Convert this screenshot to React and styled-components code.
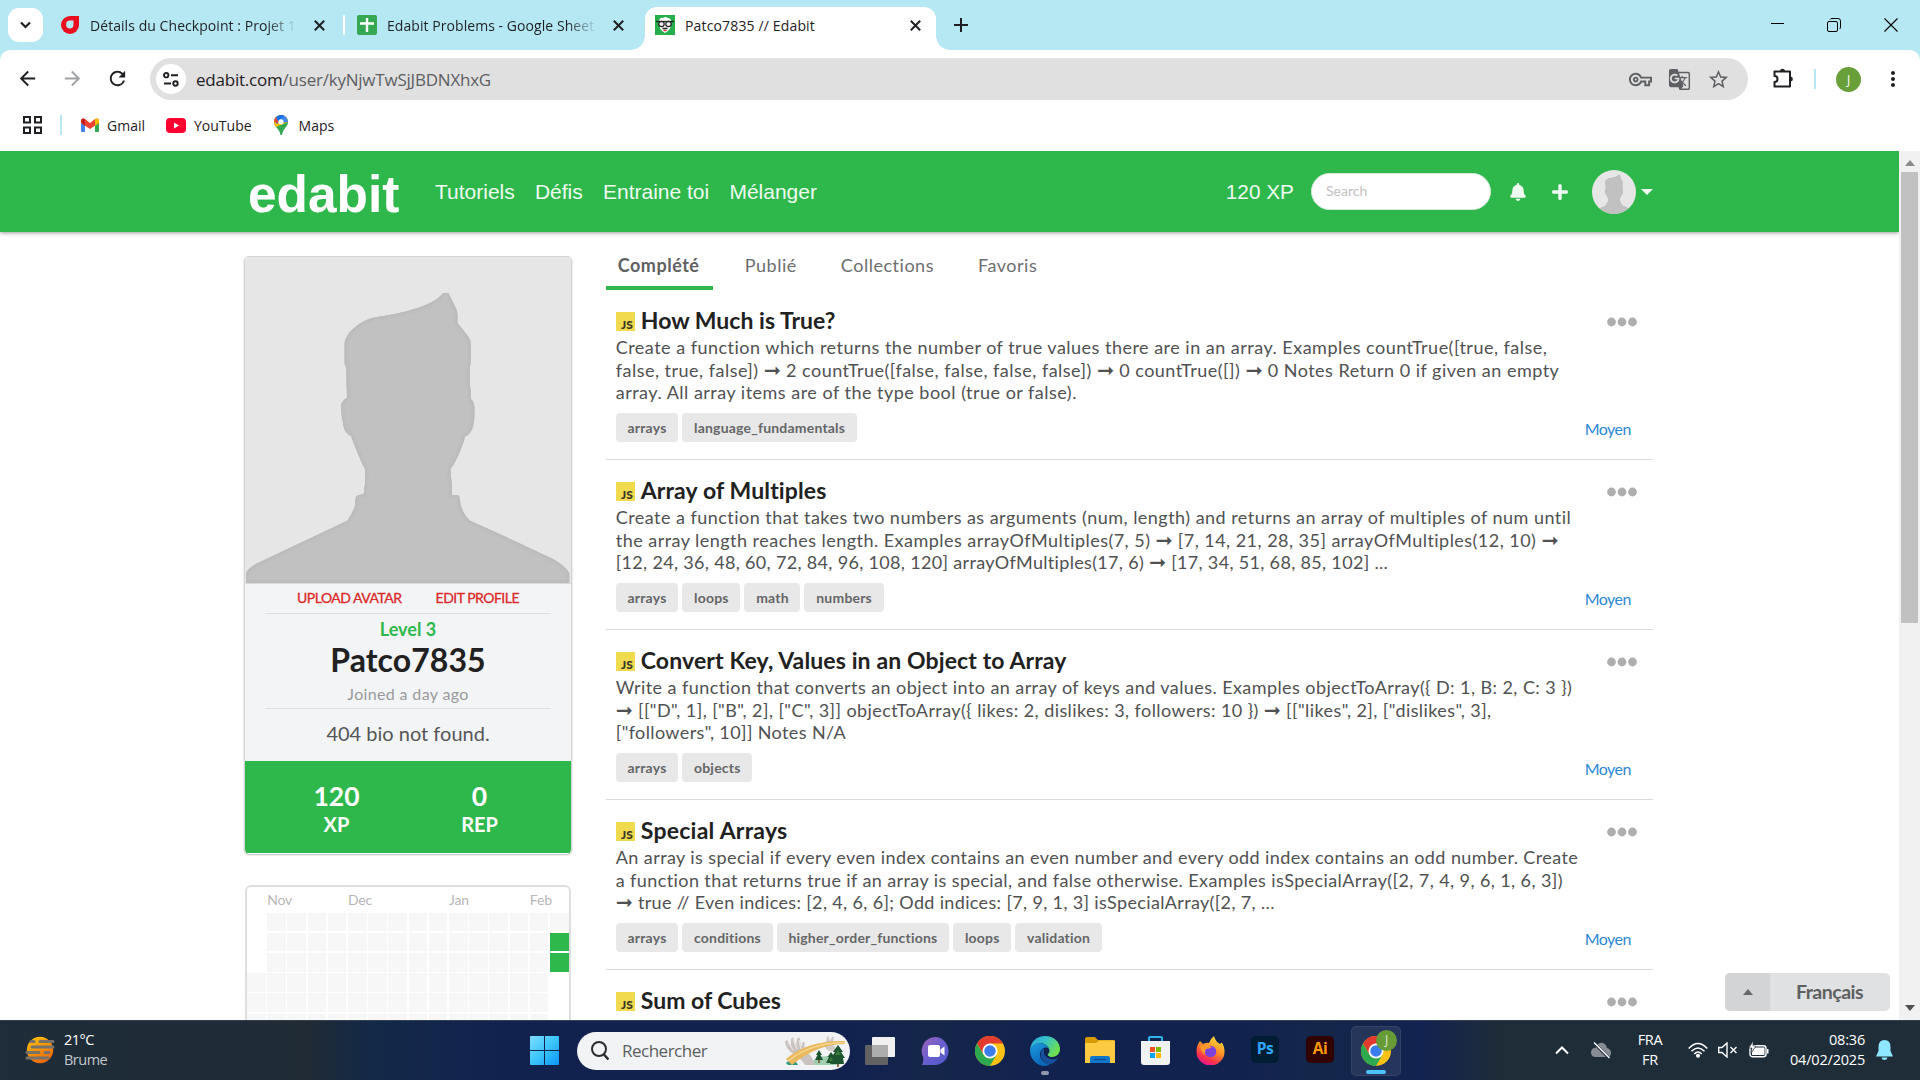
import React from 'react';
import styled, { createGlobalStyle, css } from 'styled-components';
import {
  MdArrowBack,
  MdArrowForward,
  MdRefresh,
  MdOutlineVpnKey,
  MdStarBorder,
  MdMoreVert,
  MdGTranslate,
} from 'react-icons/md';
import { FaBell, FaPlus } from 'react-icons/fa';

const GREEN = '#2eb84c';

const Global = createGlobalStyle`
  *, *::before, *::after { box-sizing: border-box; }
  html, body { margin: 0; padding: 0; background: #fff; overflow: hidden; }
  body { font-family: Lato, "Liberation Sans", sans-serif; }
  svg { display: block; flex: none; }
`;

const Screen = styled.div`
  width: 1920px;
  height: 1080px;
  display: flex;
  flex-direction: column;
  overflow: hidden;
`;

/* ---------- browser chrome ---------- */
const uiFont = css`
  font-family: "Open Sans", "Noto Sans", sans-serif;
  color: #1f2023;
  white-space: nowrap;
`;

const TabStrip = styled.div`
  ${uiFont}
  height: 50px;
  flex: none;
  display: flex;
  background: #b5e8f3;
`;
const TabSearch = styled.div`
  width: 35px;
  height: 34px;
  margin: 8px 7px 0 8px;
  border-radius: 11px;
  background: #fff;
  display: flex;
  align-items: center;
  justify-content: center;
`;
const BrowserTab = styled.div`
  width: ${(p) => p.$w}px;
  padding-left: ${(p) => p.$pad}px;
  display: flex;
  align-items: center;
  font-size: 14px;
  letter-spacing: ${(p) => (p.$active ? '0.15px' : '0.06px')};
  position: relative;
  ${(p) =>
    p.$active &&
    css`
      margin-top: 7px;
      padding-bottom: 7px;
      background: #fff;
      border-radius: 12px 12px 0 0;
      &::before, &::after {
        content: '';
        position: absolute;
        bottom: 0;
        width: 14px;
        height: 14px;
      }
      &::before { left: -14px; background: radial-gradient(circle at 0 0, #b5e8f3 13.5px, #fff 14px); }
      &::after { right: -14px; background: radial-gradient(circle at 100% 0, #b5e8f3 13.5px, #fff 14px); }
    `}
`;
const TabTitle = styled.span`
  width: ${(p) => p.$w}px;
  margin-left: ${(p) => p.$gap}px;
  padding-top: 1px;
  overflow: hidden;
  ${(p) => p.$fade && css`mask-image: linear-gradient(90deg, #000 ${p.$w - 32}px, transparent ${p.$w - 2}px);`}
`;
const TabClose = styled.span`
  margin-left: auto;
  margin-right: ${(p) => p.$r}px;
`;
const TabDivider = styled.div`
  width: 2px;
  height: 20px;
  margin-top: 15px;
  border-radius: 1px;
  background: #fff;
`;
const NewTab = styled.div`
  margin-left: 18px;
  display: flex;
  align-items: center;
`;
const WindowButtons = styled.div`
  margin-left: auto;
  padding-right: 22px;
  display: flex;
  align-items: center;
  gap: 43px;
`;

const ChromeBody = styled.div`
  flex: none;
  height: 101px;
  background: #b5e8f3;
`;
const ChromePanel = styled.div`
  ${uiFont}
  height: 101px;
  background: #fff;
  border-radius: 10px 10px 0 0;
`;
const Toolbar = styled.div`
  height: 58px;
  padding: 0 15px 0 16px;
  display: flex;
  align-items: center;
  color: #1f2023;
`;
const NavButtons = styled.div`
  width: 134px;
  display: flex;
  align-items: center;
  gap: 22px;
  svg { position: relative; top: -1px; }
  svg:nth-child(2) { color: #a0a2a5; }
`;
const Omnibox = styled.div`
  width: 1598px;
  height: 42px;
  padding: 0 18px 0 6px;
  border-radius: 21px;
  background: #e0e0e0;
  display: flex;
  align-items: center;
  font-size: 17px;
  letter-spacing: -0.22px;
`;
const SiteInfo = styled.div`
  width: 30px;
  height: 30px;
  border-radius: 50%;
  background: #fff;
  margin-right: 10px;
  display: flex;
  align-items: center;
  justify-content: center;
`;
const UrlPath = styled.span`color: #5d5f62;`;
const OmniActions = styled.div`
  margin-left: auto;
  display: flex;
  align-items: center;
  gap: 16px;
  color: #5d5f62;
`;
const ToolbarEnd = styled.div`
  display: flex;
  align-items: center;
  padding-left: 23px;
`;
const ToolbarRule = styled.div`
  width: 2px;
  height: 20px;
  margin: 0 20px 0 19px;
  background: #b5e8f3;
`;
const Profile = styled.div`
  width: 25px;
  height: 25px;
  border-radius: 50%;
  background: #689f38;
  color: #fff;
  font-size: 12px;
  line-height: 25px;
  text-align: center;
  margin-right: 20px;
`;
const Bookmarks = styled.div`
  height: 34px;
  padding-left: 23px;
  display: flex;
  align-items: center;
  font-size: 14px;
`;
const BookmarkRule = styled.div`
  width: 2px;
  height: 20px;
  margin: 0 19px 0 18px;
  background: #b5e8f3;
`;
const Bookmark = styled.div`
  display: flex;
  align-items: center;
  gap: 8px;
  margin-right: 21px;
`;

/* ---------- page ---------- */
const Viewport = styled.div`
  height: 869px;
  flex: none;
  display: flex;
  overflow: hidden;
  position: relative;
`;
const Page = styled.div`
  width: 1899px;
  overflow: hidden;
`;
const SiteHeader = styled.header`
  height: 81px;
  padding: 0 246px 0 248px;
  background: ${GREEN};
  box-shadow: 0 1px 4px rgba(0, 0, 0, 0.4);
  display: flex;
  align-items: center;
  font-family: "Liberation Sans", Arial, sans-serif;
  color: #effaf1;
  position: relative;
`;
const Brand = styled.div`
  width: 187px;
  padding-top: 4px;
  font-size: 51.4px;
  font-weight: 700;
  line-height: 60px;
  color: #fff;
`;
const SiteNav = styled.nav`
  display: flex;
  gap: 20.2px;
  font-size: 21px;
  line-height: 24px;
`;
const HeaderEnd = styled.div`
  margin-left: auto;
  display: flex;
  align-items: center;
`;
const Xp = styled.span`
  font-size: 20.8px;
  line-height: 24px;
  margin-right: 17px;
`;
const SearchBox = styled.div`
  width: 180px;
  height: 37px;
  padding-left: 14px;
  border-radius: 19px;
  border: 1px solid #d5e8d9;
  background: #fff;
  color: #bfc1c2;
  font: 14px/34px Lato, sans-serif;
  margin-right: 18px;
`;
const HeaderIcons = styled.div`
  display: flex;
  align-items: center;
  gap: 24px;
`;
const HeaderAvatar = styled.div`
  width: 44px;
  height: 44px;
  border-radius: 50%;
  overflow: hidden;
  margin: 0 5px 0 23px;
`;
const Caret = styled.div`
  width: 0;
  height: 0;
  border: ${(p) => p.$half || 5.5}px solid transparent;
  ${(p) =>
    p.$up
      ? css`border-top: 0; border-bottom: 6px solid ${p.$color};`
      : css`border-bottom: 0; border-top: ${p.$half || 6}px solid ${p.$color};`}
`;

const Columns = styled.main`
  display: flex;
  padding: 0 246px 0 244px;
`;
const Aside = styled.aside`
  width: 362px;
  padding-top: 24px;
`;
const Card = styled.section`
  width: 328px;
  height: 598px;
  border-radius: 5px;
  border: 1px solid #d4d4d5;
  border-bottom: 0;
  box-shadow: 0 1px 2px #bcbdbd;
  overflow: hidden;
`;
const CardMeta = styled.div`
  height: 178px;
  border-top: 1px solid #d8d9da;
  background: #f3f4f5;
  padding: 0 20px;
  text-align: center;
`;
const CardLinks = styled.div`
  height: 30px;
  display: flex;
  justify-content: center;
  gap: 34px;
  border-bottom: 1px solid #dededf;
  font-size: 14px;
  line-height: 28px;
  letter-spacing: -0.5px;
  color: #db2828;
  -webkit-text-stroke: 0.3px #db2828;
`;
const Level = styled.div`
  font-size: 18px;
  font-weight: 700;
  line-height: 31px;
  color: ${GREEN};
`;
const UserName = styled.div`
  font-size: 32px;
  font-weight: 700;
  height: 31px;
  line-height: 29px;
  letter-spacing: 0.05px;
  color: #212121;
`;
const Joined = styled.div`
  padding-top: 4px;
  line-height: 28px;
  font-size: 16px;
  letter-spacing: 0.35px;
  color: #999a9b;
  border-bottom: 1px solid #dededf;
`;
const Bio = styled.div`
  font-size: 20px;
  line-height: 49px;
  color: #555657;
`;
const Stats = styled.div`
  height: 92px;
  padding: 20px 20px 0;
  background: ${GREEN};
  display: grid;
  grid-template-columns: 1fr 1fr;
  text-align: center;
  font-weight: 700;
  color: #fff;
`;
const StatValue = styled.div`
  font-size: 26.5px;
  line-height: 30px;
`;
const StatLabel = styled.div`
  font-size: 20px;
  line-height: 26px;
`;

const Activity = styled.section`
  width: 326px;
  height: 200px;
  margin: 31px 0 0 1px;
  border: 2px solid #dededf;
  border-radius: 6px;
  overflow: hidden;
`;
const Months = styled.div`
  display: grid;
  grid-template-columns: repeat(16, 20.21px);
  height: 25.6px;
  font-size: 14px;
  line-height: 26px;
  letter-spacing: -0.2px;
  color: #b7b7b7;
`;
const Month = styled.span`
  grid-column: ${(p) => p.$col} / span 2;
  grid-row: 1;
`;
const Weeks = styled.div`
  display: grid;
  grid-template-columns: repeat(16, 18.5px);
  grid-auto-rows: 18.5px;
  gap: 1.71px;
`;
const Day = styled.i`
  background: ${(p) => ({ none: 'transparent', empty: '#f7f7f7', done: GREEN }[p.$state])};
`;

const Main = styled.div`
  width: 1048px;
  padding-top: 15px;
`;
const SubTabs = styled.div`
  display: flex;
  gap: 20px;
  height: 43px;
`;
const SubTab = styled.div`
  padding: 0 12px;
  font-size: 18px;
  line-height: 37px;
  letter-spacing: 0.52px;
  color: #6d6e6f;
  border-bottom: 4px solid ${(p) => (p.$active ? GREEN : 'transparent')};
  ${(p) => p.$active && css`font-weight: 700; color: #606162; width: 107px;`}
`;
const Challenge = styled.article`
  height: 170px;
  padding: 16px 16px 0 10px;
  border-bottom: 1px solid #d9dadb;
  display: flex;
  justify-content: space-between;
`;
const ChallengeTitle = styled.h3`
  margin: 0;
  display: flex;
  gap: 6px;
  font-size: 23px;
  font-weight: 700;
  line-height: 28px;
  letter-spacing: ${(p) => p.$tracking}px;
  color: #212121;
  white-space: nowrap;
  svg { margin-top: 6px; }
`;
const Description = styled.p`
  margin: 0;
  padding-top: 2px;
  font-size: 18px;
  line-height: 22.65px;
  color: #505152;
  white-space: nowrap;
`;
const Line = styled.span`
  display: block;
  height: 22.65px;
  letter-spacing: ${(p) => p.$tracking}px;
`;
const Arrow = styled.span`
  font-family: "DejaVu Sans", sans-serif;
  font-size: 20.5px;
  line-height: 0;
  letter-spacing: 0;
`;
const Tags = styled.div`
  display: flex;
  gap: 4px;
  margin-top: 9px;
`;
const Tag = styled.span`
  height: 29px;
  padding: 0 11.7px 0 11.8px;
  border-radius: 4px;
  background: #e8e8e8;
  font-size: 14px;
  font-weight: 700;
  line-height: 30px;
  letter-spacing: 0.2px;
  color: #656667;
`;
const ChallengeSide = styled.div`
  display: flex;
  flex-direction: column;
  align-items: flex-end;
  justify-content: space-between;
  padding: 11px 0 19px;
`;
const Difficulty = styled.span`
  margin-right: 6px;
  font-size: 16px;
  line-height: 22px;
  letter-spacing: -0.5px;
  color: #2d88d6;
`;

const Language = styled.div`
  position: absolute;
  left: 1725px;
  top: 822px;
  width: 165px;
  height: 38px;
  display: flex;
  border-radius: 5px;
  overflow: hidden;
  background: #e0e1e2;
  font-size: 19.5px;
  font-weight: 700;
  letter-spacing: -0.5px;
  line-height: 37px;
  color: #5f6061;
`;
const LanguageToggle = styled.div`
  width: 45px;
  background: #d3d4d6;
  display: flex;
  align-items: center;
  justify-content: center;
`;
const LanguageName = styled.div`
  flex: 1;
  padding-right: 1px;
  text-align: center;
`;

const Scrollbar = styled.div`
  width: 21px;
  background: #f1f1f1;
  display: flex;
  flex-direction: column;
  align-items: center;
  padding: 9px 0 9px;
`;
const Thumb = styled.div`
  width: 17px;
  height: 451px;
  margin: 6px 0 auto;
  background: #c1c1c1;
`;

/* ---------- taskbar ---------- */
const Taskbar = styled.footer`
  height: 60px;
  flex: none;
  display: flex;
  align-items: center;
  padding: 0 27px 0 25px;
  border-top: 1px solid #33414f;
  background: linear-gradient(90deg, #1e2d39 0, #202b36 310px, #132947 370px, #12224f 500px, #12224f 860px, #15264a 930px, #12224f 1040px, #12224f 1250px, #14274a 1320px, #122250 1420px, #1f2d39 1500px);
  color: #fff;
  font-family: "Open Sans", "Noto Sans", sans-serif;
  white-space: nowrap;
`;
const Weather = styled.div`
  width: 505px;
  padding-bottom: 2px;
  display: flex;
  align-items: center;
  gap: 9px;
  font-size: 14.5px;
  line-height: 20px;
  letter-spacing: -0.5px;
`;
const Muted = styled.div`color: #c3c8cc;`;
const SearchPill = styled.div`
  width: 273px;
  height: 38px;
  margin: 0 15px 0 18px;
  padding: 0 3px 0 14px;
  border-radius: 19px;
  background: #f1f3f5;
  display: flex;
  align-items: center;
  font-size: 17px;
  letter-spacing: -0.5px;
  color: #5c5e60;
  svg:last-child { margin-left: auto; }
`;
const PillText = styled.span`
  margin-left: 13px;
  padding-bottom: 1px;
`;
const Apps = styled.div`
  display: flex;
  align-items: center;
  gap: 25px;
`;
const AppSlot = styled.div`
  width: 30px;
  height: 50px;
  display: flex;
  flex-direction: column;
  align-items: center;
  justify-content: center;
  position: relative;
`;
const RunMark = styled.i`
  position: absolute;
  bottom: 1px;
  width: ${(p) => p.$w}px;
  height: 4px;
  border-radius: 2px;
  background: ${(p) => p.$c};
`;
const AdobeTile = styled.div`
  width: 28px;
  height: 27px;
  margin-bottom: 3px;
  border-radius: 5px;
  background: ${(p) => p.$bg};
  color: ${(p) => p.$fg};
  font: 700 15.5px/25px "Open Sans", sans-serif;
  letter-spacing: -0.4px;
  text-align: center;
`;
const ActiveApp = styled.div`
  width: 50px;
  height: 50px;
  margin-left: -9px;
  border-radius: 5px;
  background: rgba(255, 255, 255, 0.08);
  border: 1px solid rgba(255, 255, 255, 0.07);
  display: flex;
  align-items: center;
  justify-content: center;
  position: relative;
`;
const ActiveBadge = styled.span`
  position: absolute;
  right: 3px;
  top: 3px;
  width: 21px;
  height: 21px;
  border-radius: 50%;
  background: #669b36;
  color: #dfe9d6;
  font-size: 12px;
  line-height: 20px;
  text-align: center;
`;
const Tray = styled.div`
  margin-left: auto;
  padding-bottom: 1px;
  display: flex;
  align-items: center;
  font-size: 14.5px;
  line-height: 20px;
  letter-spacing: -0.2px;
`;
const Keyboard = styled.div`
  margin: 0 24px 0 24px;
  width: 28px;
  text-align: center;
  line-height: 20px;
  letter-spacing: -0.3px;
`;
const Clock = styled.div`
  width: 80px;
  margin: 0 11px 0 16px;
  padding-bottom: 1px;
  text-align: right;
  line-height: 20px;
`;

/* ---------- drawings ---------- */
const HEAD =
  'M48 1030V1000Q54 984 84 969L352 842Q368 820 375 798L377 775Q378 766 388 765L401 763L405 732V688Q384 645 363 588Q346 580 341 560Q333 525 333 495Q337 482 351 473L349 382Q345 380 344 370V312C346 280 385 245 430 233C480 226 520 218 560 205C595 194 625 178 640 159H655L680 210Q684 225 682 248L715 290Q722 298 722 312V365Q719 380 719 400V435Q723 450 723 478Q732 485 733 500Q735 550 725 570Q718 585 706 588Q686 655 661 688L665 732V765L685 766Q690 770 691 790Q698 822 720 842Q850 900 970 958Q1005 978 1018 1000V1030Z';

const Silhouette = ({ size, id }) => (
  <svg width={size} height={size} viewBox="45 51 978 978">
    <rect x="45" y="51" width="978" height="978" fill="#e6e6e6" />
    <clipPath id={id}><path d={HEAD} /></clipPath>
    <path d={HEAD} fill="#c1c1c1" />
    <g clipPath={`url(#${id})`} fill="none">
      <path d={HEAD} stroke="#bfbfbf" strokeWidth="24" />
      <path d={HEAD} stroke="#bcbcbc" strokeWidth="12" />
    </g>
  </svg>
);

const Cross = ({ size = 11, w = 2 }) => (
  <svg width={size} height={size} viewBox="0 0 11 11" stroke="#1f2023" strokeWidth={w}>
    <path d="M.8.8l9.4 9.4M10.2.8L.8 10.2" />
  </svg>
);

const ExtensionIcon = () => (
  <svg width="24" height="24" viewBox="0 0 24 24">
    <path d="M3.500 4.500H19V19.500H3.500V15Q6.500 15 6.500 12T3.500 9Z" fill="none" stroke="#1f2023" strokeWidth="2" strokeLinejoin="round" />
    <path d="M9 4.500a2.500 2.800 0 0 1 5 0zM19 9.500a2.800 2.500 0 0 1 0 5z" fill="#1f2023" />
  </svg>
);

const ChromeLogo = () => (
  <svg width="30" height="30" viewBox="0 0 48 48">
    <circle cx="24" cy="24" r="24" fill="#fbc116" />
    <path d="M3.2 12A24 24 0 0 1 44.8 12H24L13.6 30Z" fill="#e33b2e" />
    <path d="M3.2 12A24 24 0 0 0 24 48L34.4 30L24 35L13.6 30Z" fill="#2da94f" />
    <circle cx="24" cy="24" r="12" fill="#fff" />
    <circle cx="24" cy="24" r="9.2" fill="#3b7ded" />
  </svg>
);

const EdgeLogo = () => (
  <svg width="30" height="30" viewBox="0 0 30 30">
    <defs>
      <linearGradient id="edgeTop" x1="0" y1="0" x2="1" y2=".5">
        <stop offset="0" stopColor="#2aa5dc" /><stop offset=".5" stopColor="#35c1c9" /><stop offset="1" stopColor="#6fe04f" />
      </linearGradient>
      <linearGradient id="edgeLeft" x1="0" y1="0" x2=".4" y2="1">
        <stop offset="0" stopColor="#1b9ae0" /><stop offset="1" stopColor="#0c66b8" />
      </linearGradient>
    </defs>
    <path d="M0 14C1 5 7 0 15 0C24 0 30 6 30 13C30 18 26 21 22 21C19 21 17 19 18 18C20 16 20 14 18 11C14 5 4 6 0 14Z" fill="url(#edgeTop)" />
    <path d="M0 14C2 8 8 6 13 8C17 9 19 12 19 13C16 10 11 12 10 17C9 23 14 28 20 28C17 31 9 31 4 25C1 22 0 18 0 14Z" fill="url(#edgeLeft)" />
    <path d="M14 12C9 15 9 24 17 28C21 29 26 26 28 22C22 25 15 22 14 17Z" fill="#15509a" />
  </svg>
);

const FolderIcon = () => (
  <svg width="30" height="27" viewBox="0 0 30 27">
    <path d="M0 2Q0 0 2 0H10L13 3H28Q30 3 30 5V9H0Z" fill="#d99a07" />
    <path d="M0 6H11L14 3.5H30V26H0Z" fill="#fccb41" />
    <path d="M5 26V21Q5 19 7 19H23Q25 19 25 21V26Z" fill="#1277cb" />
    <path d="M9 22.5H21" stroke="#0a4f92" strokeWidth="1.4" />
  </svg>
);

const StoreIcon = () => (
  <svg width="29" height="29" viewBox="0 0 29 29">
    <path d="M8 6V2Q8 1 9 1H20Q21 1 21 2V6" fill="none" stroke="#30b3ea" strokeWidth="2" />
    <path d="M0 5H29V26Q29 29 26 29H3Q0 29 0 26Z" fill="#f1f2f2" />
    <path d="M9 11h5v5H9z" fill="#f04f23" /><path d="M15 11h5v5h-5z" fill="#7fb900" />
    <path d="M9 17h5v5H9z" fill="#02a3ee" /><path d="M15 17h5v5h-5z" fill="#feb801" />
  </svg>
);

const FirefoxIcon = () => (
  <svg width="29" height="29" viewBox="0 0 29 29">
    <defs>
      <linearGradient id="fox" x1=".8" y1="0" x2=".3" y2="1">
        <stop offset="0" stopColor="#ffe63c" /><stop offset=".45" stopColor="#ff9228" /><stop offset=".8" stopColor="#fb2e50" /><stop offset="1" stopColor="#e0159b" />
      </linearGradient>
    </defs>
    <path d="M4 5L7 8Q10 6 13 7Q14 3 18 0Q19 5 24 8L26 6.500Q29 12 28.500 16A14 13.500 0 0 1 .5 16Q.5 9 4 5Z" fill="url(#fox)" />
    <circle cx="14.500" cy="15.500" r="5.800" fill="#7b42dd" />
    <path d="M4 10Q10 8 16 11Q13 13 10 13Q8 16 9 19Q5 16 4 10Z" fill="#ff9a2b" />
  </svg>
);

const ChatIcon = () => (
  <svg width="29" height="28" viewBox="0 0 29 28">
    <defs>
      <linearGradient id="chat" x1="0" y1="0" x2="1" y2="1">
        <stop offset="0" stopColor="#9a64b8" /><stop offset=".5" stopColor="#6b5fd0" /><stop offset="1" stopColor="#4b58c8" />
      </linearGradient>
    </defs>
    <path d="M15 0A14 14 0 1 1 12 28H1Q3 24 2 20A14 14 0 0 1 15 0Z" fill="url(#chat)" />
    <rect x="7" y="8" width="12" height="12" rx="2" fill="#fff" />
    <path d="M19.500 12.500L23.500 9.500V18.500L19.500 15.500Z" fill="#fff" />
  </svg>
);

const SearchArt = () => (
  <svg width="63" height="32" viewBox="0 0 63 32">
    <path d="M25 30Q34 18 52 22L60 26Q57 30 52 30Z" fill="#9fcfae" />
    <path d="M2 28L9 22L14 30H4Z" fill="#2c9a7c" />
    <path d="M1 7Q2 4 4 6L7 12L7 4Q8.500 1 10 4L12 11L13 4Q15 1 16 4L17 12L19 7Q21 6 20.500 10L21 15Q27 19 31 30H21Q17 23 8 18Q2 14 1 7Z" fill="#cbc3c0" />
    <path d="M4 7L9 15M9 4L13 14M15 5L17 14" stroke="#eae5e3" strokeWidth="1.200" fill="none" />
    <path d="M41 12L43 2Q44 0 45 3L46 6L48 2Q50 0 49.500 4L49 9L53 15Q47 18 42 14Z" fill="#d0cac7" />
    <path d="M2 24Q24 5 61 6V9Q33 9 8 30Z" fill="#e9b85c" />
    <path d="M4 26Q26 8 61 7.500" stroke="#f7d590" strokeWidth="1.400" fill="none" />
    <path d="M35 15L32 20H33.500L31 25H39L36.500 20H38ZM54 10L49 17H51L47 23H49L46 29H60L59 23H61L57 17H59ZM47 17L43.500 22H45L42 28H52L49 22H50.500Z" fill="#1d5530" />
    <path d="M54 15L51 20H57ZM47 22L45 26H49Z" fill="#3c7a3a" />
    <path d="M35 25v3M54 29v3" stroke="#7a4a26" strokeWidth="1.500" />
  </svg>
);

const WeatherIcon = () => (
  <svg width="30" height="30" viewBox="0 0 30 30">
    <defs>
      <linearGradient id="sun" x1="0" y1="0" x2=".5" y2="1">
        <stop offset="0" stopColor="#ffc800" /><stop offset="1" stopColor="#ee6a0a" />
      </linearGradient>
    </defs>
    <circle cx="15" cy="15" r="13.200" fill="url(#sun)" />
    <g stroke="#77726c" strokeWidth="3" strokeLinecap="round">
      <path d="M6 6.500h3M15 6.500h13M7 12h21M2 17.500h12M20 17.500h4M2 23h21" />
    </g>
  </svg>
);

const Dots = () => (
  <svg width="30" height="10" viewBox="0 0 30 10" fill="#aeaeae">
    <circle cx="4.500" cy="5" r="4.400" /><circle cx="15" cy="5" r="4.400" /><circle cx="25.500" cy="5" r="4.400" />
  </svg>
);

const JsBadge = () => (
  <svg width="19" height="19" viewBox="0 0 19 19">
    <rect width="19" height="19" fill="#f0db4f" />
    <text x="5" y="17.300" fontFamily="Lato, sans-serif" fontWeight="900" fontSize="12" letterSpacing="0" fill="#3a3726">JS</text>
  </svg>
);

/* ---------- data: each description line is [text, tracking] ---------- */
const challenges = [
  {
    title: 'How Much is True?',
    tracking: 0.02,
    lines: [
      ['Create a function which returns the number of true values there are in an array. Examples countTrue([true, false,', 0.485],
      ['false, true, false]) ➞ 2 countTrue([false, false, false, false]) ➞ 0 countTrue([]) ➞ 0 Notes Return 0 if given an empty', 0.485],
      ['array. All array items are of the type bool (true or false).', 0.485],
    ],
    tags: ['arrays', 'language_fundamentals'],
  },
  {
    title: 'Array of Multiples',
    tracking: 0.12,
    lines: [
      ['Create a function that takes two numbers as arguments (num, length) and returns an array of multiples of num until', 0.465],
      ['the array length reaches length. Examples arrayOfMultiples(7, 5) ➞ [7, 14, 21, 28, 35] arrayOfMultiples(12, 10) ➞', 0.465],
      ['[12, 24, 36, 48, 60, 72, 84, 96, 108, 120] arrayOfMultiples(17, 6) ➞ [17, 34, 51, 68, 85, 102] ...', 0.325],
    ],
    tags: ['arrays', 'loops', 'math', 'numbers'],
  },
  {
    title: 'Convert Key, Values in an Object to Array',
    tracking: 0.12,
    lines: [
      ['Write a function that converts an object into an array of keys and values. Examples objectToArray({ D: 1, B: 2, C: 3 })', 0.425],
      ['➞ [["D", 1], ["B", 2], ["C", 3]] objectToArray({ likes: 2, dislikes: 3, followers: 10 }) ➞ [["likes", 2], ["dislikes", 3],', 0.425],
      ['["followers", 10]] Notes N/A', 0.38],
    ],
    tags: ['arrays', 'objects'],
  },
  {
    title: 'Special Arrays',
    tracking: 0.25,
    lines: [
      ['An array is special if every even index contains an even number and every odd index contains an odd number. Create', 0.415],
      ['a function that returns true if an array is special, and false otherwise. Examples isSpecialArray([2, 7, 4, 9, 6, 1, 6, 3])', 0.405],
      ['➞ true // Even indices: [2, 4, 6, 6]; Odd indices: [7, 9, 1, 3] isSpecialArray([2, 7, ...', 0.345],
    ],
    tags: ['arrays', 'conditions', 'higher_order_functions', 'loops', 'validation'],
  },
  { title: 'Sum of Cubes', tracking: 0, lines: [], tags: [] },
];

const withArrows = (line) =>
  line.split('➞').map((part, i) => (
    <React.Fragment key={i}>
      {i > 0 && <Arrow>➞</Arrow>}
      {part}
    </React.Fragment>
  ));

const dayState = (row, col) => {
  if (col === 0) return row < 3 ? 'none' : 'empty';
  if (col < 15) return 'empty';
  return ['empty', 'done', 'done'][row] || 'none';
};
const days = Array.from({ length: 7 * 16 }, (_, i) => dayState(Math.floor(i / 16), i % 16));

/* ---------- sections ---------- */
const Browser = () => (
  <>
    <TabStrip>
      <TabSearch>
        <svg width="11" height="8" viewBox="0 0 11 8" fill="none" stroke="#1f2023" strokeWidth="2.200"><path d="M1 1.500l4.500 4.500L10 1.500" /></svg>
      </TabSearch>
      <BrowserTab $w={293} $pad={11}>
        <svg width="18" height="18" viewBox="0 0 18 18"><path d="M18 0V9A9 9 0 1 1 9 0Z" fill="#ea0f1e" /><path d="M12.500 4.500V9A3.700 4 0 1 1 9 4.500Z" fill="#b5e8f3" /></svg>
        <TabTitle $w={209} $gap={11} $fade>Détails du Checkpoint : Projet 1</TabTitle>
        <TabClose $r={18}><Cross /></TabClose>
      </BrowserTab>
      <TabDivider />
      <BrowserTab $w={300} $pad={12}>
        <svg width="20" height="20" viewBox="0 0 20 20"><rect width="20" height="20" rx="2" fill="#34a853" /><path d="M10 3v14M3 8.500h14" stroke="#fff" strokeWidth="2.400" /></svg>
        <TabTitle $w={212} $gap={10} $fade>Edabit Problems - Google Sheet</TabTitle>
        <TabClose $r={21}><Cross /></TabClose>
      </BrowserTab>
      <BrowserTab $w={291} $pad={10} $active>
        <svg width="20" height="20" viewBox="0 0 20 20">
          <rect width="20" height="20" fill="#25ae49" />
          <path d="M4 8Q4 2 8 3Q10 1 13 3Q17 3 16 9Q16 15 10 18Q4 15 4 8Z" fill="#fff" />
          <circle cx="6.500" cy="9" r="2.700" fill="#f1f1f1" stroke="#222" strokeWidth="1.200" />
          <circle cx="13.500" cy="9" r="2.700" fill="#f1f1f1" stroke="#222" strokeWidth="1.200" />
          <path d="M1 6.500h18" stroke="#222" strokeWidth="1.300" />
          <path d="M7.500 13.500h5" stroke="#222" strokeWidth="1.600" /><path d="M8.500 15.500h3" stroke="#c22" strokeWidth="1.300" />
        </svg>
        <TabTitle $w={200} $gap={10}>Patco7835 // Edabit</TabTitle>
        <TabClose $r={15}><Cross /></TabClose>
      </BrowserTab>
      <NewTab>
        <svg width="14" height="14" viewBox="0 0 14 14" stroke="#1f2023" strokeWidth="2"><path d="M7 0v14M0 7h14" /></svg>
      </NewTab>
      <WindowButtons>
        <svg width="13" height="13" viewBox="0 0 13 13" stroke="#000"><path d="M0 4.500h13" /></svg>
        <svg width="14" height="14" viewBox="0 0 14 14" fill="none" stroke="#000"><rect x=".5" y="3.500" width="10" height="10" rx="1.500" /><path d="M3 1.500Q3.500.5 5 .5H11Q13.500.5 13.500 3V9Q13.500 10.500 12.500 11" /></svg>
        <svg width="14" height="14" viewBox="0 0 14 14" stroke="#000" strokeWidth="1.100"><path d="M.5.5l13 13M13.500.5l-13 13" /></svg>
      </WindowButtons>
    </TabStrip>
    <ChromeBody>
      <ChromePanel>
        <Toolbar>
          <NavButtons>
            <MdArrowBack size={23} />
            <MdArrowForward size={23} />
            <MdRefresh size={23} />
          </NavButtons>
          <Omnibox>
            <SiteInfo>
              <svg width="16" height="15" viewBox="0 0 16 15" fill="none" stroke="#1f2023" strokeWidth="1.900"><circle cx="3.200" cy="3.200" r="2.200" /><path d="M8 3.200h7M1 11.500h7" /><circle cx="12.500" cy="11.500" r="2.200" /></svg>
            </SiteInfo>
            edabit.com<UrlPath>/user/kyNjwTwSjJBDNXhxG</UrlPath>
            <OmniActions>
              <MdOutlineVpnKey size={23} />
              <MdGTranslate size={23} />
              <MdStarBorder size={23} />
            </OmniActions>
          </Omnibox>
          <ToolbarEnd>
            <ExtensionIcon />
            <ToolbarRule />
            <Profile>J</Profile>
            <MdMoreVert size={24} />
          </ToolbarEnd>
        </Toolbar>
        <Bookmarks>
          <svg width="19" height="18" viewBox="0 0 19 18" fill="none" stroke="#1f2023" strokeWidth="2"><path d="M1 1h6v5.500H1zM12 1h6v5.500h-6zM1 11.500h6V17H1zM12 11.500h6V17h-6z" /></svg>
          <BookmarkRule />
          <Bookmark>
            <svg width="18" height="14" viewBox="0 0 18 14"><path d="M0 2V13q0 1 1 1H4V5z" fill="#4285f4" /><path d="M18 2V13q0 1-1 1H14V5z" fill="#34a853" /><path d="M0 2Q1-.5 4 1L9 5L14 1Q17-.5 18 2V5L9 11L0 5Z" fill="#ea4335" /><path d="M14 1Q17-.5 18 2V5L14 8Z" fill="#fbbc04" /><path d="M0 2Q0 5 4 8V1Q1-.5 0 2Z" fill="#c5221f" /></svg>
            Gmail
          </Bookmark>
          <Bookmark>
            <svg width="20" height="15" viewBox="0 0 20 15"><rect width="20" height="15" rx="4" fill="#f03" /><path d="M8 4.500v6l5-3z" fill="#fff" /></svg>
            YouTube
          </Bookmark>
          <Bookmark>
            <svg width="18" height="20" viewBox="1 0 18 20"><path d="M2 7a7 7 0 0 1 14 0c0 5-5 6-6 13H8.500C8 14 2 12 2 7z" fill="#34a853" /><path d="M2 7a7 7 0 0 1 14 0L4 12Q2 10 2 7z" fill="#fbbc04" /><path d="M9 0a7 7 0 0 1 7 7L9 8z" fill="#4285f4" /><path d="M4 2.300A7 7 0 0 1 12 .7L5 9L2.500 5Z" fill="#1a73e8" /><path d="M4 2.300Q2 4 2 7L7 8z" fill="#ea4335" /><circle cx="9" cy="6.800" r="2.600" fill="#fff" /></svg>
            Maps
          </Bookmark>
        </Bookmarks>
      </ChromePanel>
    </ChromeBody>
  </>
);

const Header = () => (
  <SiteHeader>
    <Brand>edabit</Brand>
    <SiteNav>
      <span>Tutoriels</span>
      <span>Défis</span>
      <span>Entraine toi</span>
      <span>Mélanger</span>
    </SiteNav>
    <HeaderEnd>
      <Xp>120 XP</Xp>
      <SearchBox>Search</SearchBox>
      <HeaderIcons>
        <FaBell size={18} />
        <FaPlus size={18} />
      </HeaderIcons>
      <HeaderAvatar><Silhouette size={44} id="headSmall" /></HeaderAvatar>
      <Caret $half={6} $color="#effaf1" />
    </HeaderEnd>
  </SiteHeader>
);

const ProfileCard = () => (
  <Card>
    <Silhouette size={326} id="headLarge" />
    <CardMeta>
      <CardLinks><span>UPLOAD AVATAR</span><span>EDIT PROFILE</span></CardLinks>
      <Level>Level 3</Level>
      <UserName>Patco7835</UserName>
      <Joined>Joined a day ago</Joined>
      <Bio>404 bio not found.</Bio>
    </CardMeta>
    <Stats>
      <div><StatValue>120</StatValue><StatLabel>XP</StatLabel></div>
      <div><StatValue>0</StatValue><StatLabel>REP</StatLabel></div>
    </Stats>
  </Card>
);

export default function App() {
  return (
    <Screen>
      <Global />
      <Browser />
      <Viewport>
        <Page>
          <Header />
          <Columns>
            <Aside>
              <ProfileCard />
              <Activity>
                <Months>
                  <Month $col={2}>Nov</Month>
                  <Month $col={6}>Dec</Month>
                  <Month $col={11}>Jan</Month>
                  <Month $col={15}>Feb</Month>
                </Months>
                <Weeks>{days.map((s, i) => <Day key={i} $state={s} />)}</Weeks>
              </Activity>
            </Aside>
            <Main>
              <SubTabs>
                <SubTab $active>Complété</SubTab>
                <SubTab>Publié</SubTab>
                <SubTab>Collections</SubTab>
                <SubTab>Favoris</SubTab>
              </SubTabs>
              {challenges.map((c) => (
                <Challenge key={c.title}>
                  <div>
                    <ChallengeTitle $tracking={c.tracking}><JsBadge />{c.title}</ChallengeTitle>
                    <Description>
                      {c.lines.map(([text, tracking]) => <Line key={text} $tracking={tracking}>{withArrows(text)}</Line>)}
                    </Description>
                    <Tags>{c.tags.map((t) => <Tag key={t}>{t}</Tag>)}</Tags>
                  </div>
                  <ChallengeSide>
                    <Dots />
                    {c.tags.length > 0 && <Difficulty>Moyen</Difficulty>}
                  </ChallengeSide>
                </Challenge>
              ))}
            </Main>
          </Columns>
        </Page>
        <Scrollbar>
          <Caret $up $color="#8b8b8b" />
          <Thumb />
          <Caret $color="#505050" />
        </Scrollbar>
        <Language>
          <LanguageToggle><Caret $up $color="#66686a" /></LanguageToggle>
          <LanguageName>Français</LanguageName>
        </Language>
      </Viewport>
      <Taskbar>
        <Weather>
          <WeatherIcon />
          <div><div>21°C</div><Muted>Brume</Muted></div>
        </Weather>
        <svg width="29" height="29" viewBox="0 0 29 29">
          <defs><linearGradient id="win" x1="0" y1="0" x2="1" y2="1"><stop offset="0" stopColor="#7fdcff" /><stop offset=".5" stopColor="#3cc5fb" /><stop offset="1" stopColor="#0a94f5" /></linearGradient></defs>
          <path d="M0 1q0-1 1-1h13v14H0zM15 0h13q1 0 1 1v13H15zM0 15h14v14H1q-1 0-1-1zM15 15h14v13q0 1-1 1H15z" fill="url(#win)" />
        </svg>
        <SearchPill>
          <svg width="18" height="19" viewBox="0 0 18 19" fill="none" stroke="#2b2c2d" strokeWidth="2"><circle cx="8" cy="8" r="7" /><path d="M12.500 13l5 5.500" strokeWidth="2.500" /></svg>
          <PillText>Rechercher</PillText>
          <SearchArt />
        </SearchPill>
        <Apps>
          <AppSlot><svg width="30" height="28" viewBox="0 0 30 28"><rect y="8" width="23" height="20" rx="1" fill="#626262" /><rect x="7" y="0" width="23" height="20" rx="1" fill="#f0f0f1" /><path d="M7 8h16v12H7z" fill="#adadad" /></svg></AppSlot>
          <AppSlot><ChatIcon /></AppSlot>
          <AppSlot><ChromeLogo /></AppSlot>
          <AppSlot><EdgeLogo /><RunMark $w={8} $c="#9198ac" /></AppSlot>
          <AppSlot><FolderIcon /></AppSlot>
          <AppSlot><StoreIcon /></AppSlot>
          <AppSlot><FirefoxIcon /></AppSlot>
          <AppSlot><AdobeTile $bg="#001d33" $fg="#31a8ff">Ps</AdobeTile></AppSlot>
          <AppSlot><AdobeTile $bg="#310000" $fg="#ff9a00">Ai</AdobeTile></AppSlot>
          <ActiveApp><ChromeLogo /><ActiveBadge>J</ActiveBadge><RunMark $w={20} $c="#4cc2ff" /></ActiveApp>
        </Apps>
        <Tray>
          <svg width="14" height="9" viewBox="0 0 14 9" fill="none" stroke="#fff" strokeWidth="2"><path d="M1 7.500l6-6 6 6" /></svg>
          <svg width="43" height="18" viewBox="-22 0 43 18"><path d="M5 16Q0 16 0 11.500Q0 7 5 6.500Q7 1 12 2Q15 3 16 7Q20 8 20 12Q20 16 16 16Z" fill="#868c92" /><path d="M3 2L18 17" stroke="#1f2d39" strokeWidth="3" /><path d="M3 1.500L18.500 17" stroke="#fff" strokeWidth="1.400" /></svg>
          <Keyboard>FRA<br />FR</Keyboard>
          <svg width="20" height="16" viewBox="0 0 20 16" fill="none" stroke="#fff" strokeWidth="1.500"><path d="M.7 6.500Q10-3.500 19.300 6.500M3.500 9.300Q10 2.500 16.500 9.300M6.300 12Q10 8 13.700 12" /><circle cx="10" cy="13.700" r="1.300" fill="#fff" /></svg>
          <svg width="30" height="16" viewBox="-10 0 30 16" fill="none" stroke="#fff" strokeWidth="1.400"><path d="M.7 5.500H4L9 1V15L4 10.500H.7Z" /><path d="M12.500 5l6 6M18.500 5l-6 6" /></svg>
          <svg width="31" height="18" viewBox="-11 0 31 18"><rect x="1" y="4.700" width="16" height="11" rx="2.500" fill="none" stroke="#fff" strokeWidth="1.400" /><path d="M6 6.500h9.500v7.500H3v-3z" fill="#fff" /><path d="M18 8h1.500v4.500H18z" fill="#fff" /><path d="M4 0L0 7H3L2 12L7 5H4Z" fill="#fff" stroke="#1f2d39" strokeWidth=".6" /></svg>
          <Clock>08:36<br />04/02/2025</Clock>
          <svg width="17" height="20" viewBox="0 0 17 20" fill="#8ee6ff"><path d="M8.500 0Q14.500 0 14.500 7V11L17 16.500H0L2.500 11V7Q2.500 0 8.500 0ZM5.500 17.500H11.500Q11 20 8.500 20T5.500 17.500Z" /></svg>
        </Tray>
      </Taskbar>
    </Screen>
  );
}
